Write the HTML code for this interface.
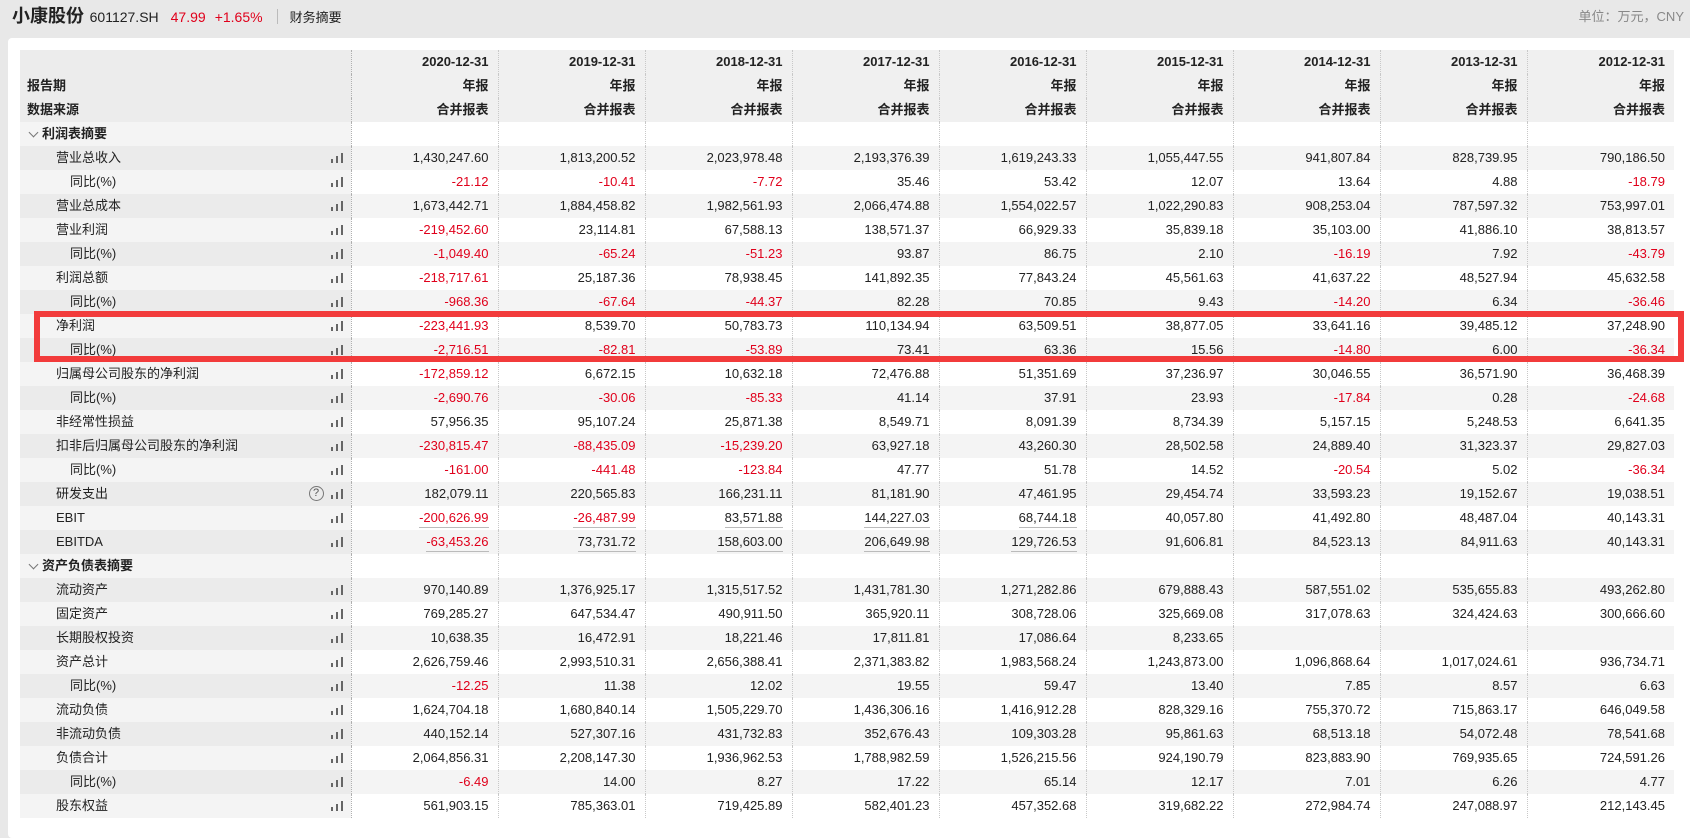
<!DOCTYPE html>
<html><head><meta charset="utf-8"><style>
*{margin:0;padding:0;box-sizing:border-box}
body{width:1690px;height:821px;overflow:hidden;background:#e8e8e8;font-family:"Liberation Sans","Noto Sans CJK SC",sans-serif;font-size:13px;color:#222;position:relative}
.top{position:absolute;left:12px;top:4px;height:24px;line-height:24px;white-space:nowrap}
.top b{font-size:18px;font-weight:bold;color:#222}
.top .code{font-size:14px;margin-left:2px}
.top .r{color:#e0001b;font-size:14px;margin-left:12px}
.top .sep{display:inline-block;width:1px;height:15px;background:#bbb;vertical-align:-2px;margin:0 12px 0 14px}
.unit{position:absolute;right:6px;top:6px;color:#888;font-size:13px}
.panel{position:absolute;left:8px;top:38px;width:1690px;height:800px;background:#fff;border-radius:4px}
table{position:absolute;left:20px;top:50px;border-collapse:collapse;table-layout:fixed}
td{height:24px;padding:0 9px 0 0;text-align:right;white-space:nowrap;border-left:1px dotted #c8c8c8;line-height:24px}
td.l{text-align:left;padding:0;border-left:none;position:relative;border-right:1px dotted #b0b0b0}
tr.h td{background:#f0f0f0;font-weight:bold}
tr.h td.l{background:#ececec;padding-left:7px}
tr.g td{background:#f4f4f4}
tr.g td.l{background:#ebebeb}
tr.w td{background:#fff}
tr.w td.l{background:#f4f4f4}
.t1{padding-left:36px!important}
.t2{padding-left:50px!important}
.sec{padding-left:22px!important;font-weight:bold}
.sec:before{content:"";position:absolute;left:10px;top:7px;width:6px;height:6px;border-right:1px solid #777;border-bottom:1px solid #777;transform:rotate(45deg)}
.n{color:#e0001b}
.ic{position:absolute;right:8px;top:7px;width:12px;height:10px;background:linear-gradient(#666,#666) 0 6px/2px 4px no-repeat,linear-gradient(#666,#666) 5px 3px/2px 7px no-repeat,linear-gradient(#666,#666) 10px 0/2px 10px no-repeat}
.q{position:absolute;right:27px;top:4px;width:15px;height:15px;border:1px solid #777;border-radius:50%;font-size:11px;line-height:13px;text-align:center;color:#555}
u{text-decoration:none;border-bottom:1px solid #bbb;padding-bottom:2px}
.box{position:absolute;left:34px;top:311px;width:1650px;height:51px;border:6px solid #f23b3b}
</style></head><body>
<div class="top"><b>小康股份</b> <span class="code">601127.SH</span><span class="r">47.99</span><span class="r" style="margin-left:9px">+1.65%</span><span class="sep"></span>财务摘要</div>
<div class="unit">单位：万元，CNY</div>
<div class="panel"></div>
<table>
<colgroup><col style="width:331px"><col style="width:147px"><col style="width:147px"><col style="width:147px"><col style="width:147px"><col style="width:147px"><col style="width:147px"><col style="width:147px"><col style="width:147px"><col style="width:147px"></colgroup>
<tr class="h"><td class="l"></td><td>2020-12-31</td><td>2019-12-31</td><td>2018-12-31</td><td>2017-12-31</td><td>2016-12-31</td><td>2015-12-31</td><td>2014-12-31</td><td>2013-12-31</td><td>2012-12-31</td></tr>
<tr class="h"><td class="l">报告期</td><td>年报</td><td>年报</td><td>年报</td><td>年报</td><td>年报</td><td>年报</td><td>年报</td><td>年报</td><td>年报</td></tr>
<tr class="h"><td class="l">数据来源</td><td>合并报表</td><td>合并报表</td><td>合并报表</td><td>合并报表</td><td>合并报表</td><td>合并报表</td><td>合并报表</td><td>合并报表</td><td>合并报表</td></tr>
<tr class="w"><td class="l sec">利润表摘要</td><td></td><td></td><td></td><td></td><td></td><td></td><td></td><td></td><td></td></tr>
<tr class="g"><td class="l t1">营业总收入<span class="ic"></span></td><td>1,430,247.60</td><td>1,813,200.52</td><td>2,023,978.48</td><td>2,193,376.39</td><td>1,619,243.33</td><td>1,055,447.55</td><td>941,807.84</td><td>828,739.95</td><td>790,186.50</td></tr>
<tr class="w"><td class="l t2">同比(%)<span class="ic"></span></td><td class="n">-21.12</td><td class="n">-10.41</td><td class="n">-7.72</td><td>35.46</td><td>53.42</td><td>12.07</td><td>13.64</td><td>4.88</td><td class="n">-18.79</td></tr>
<tr class="g"><td class="l t1">营业总成本<span class="ic"></span></td><td>1,673,442.71</td><td>1,884,458.82</td><td>1,982,561.93</td><td>2,066,474.88</td><td>1,554,022.57</td><td>1,022,290.83</td><td>908,253.04</td><td>787,597.32</td><td>753,997.01</td></tr>
<tr class="w"><td class="l t1">营业利润<span class="ic"></span></td><td class="n">-219,452.60</td><td>23,114.81</td><td>67,588.13</td><td>138,571.37</td><td>66,929.33</td><td>35,839.18</td><td>35,103.00</td><td>41,886.10</td><td>38,813.57</td></tr>
<tr class="g"><td class="l t2">同比(%)<span class="ic"></span></td><td class="n">-1,049.40</td><td class="n">-65.24</td><td class="n">-51.23</td><td>93.87</td><td>86.75</td><td>2.10</td><td class="n">-16.19</td><td>7.92</td><td class="n">-43.79</td></tr>
<tr class="w"><td class="l t1">利润总额<span class="ic"></span></td><td class="n">-218,717.61</td><td>25,187.36</td><td>78,938.45</td><td>141,892.35</td><td>77,843.24</td><td>45,561.63</td><td>41,637.22</td><td>48,527.94</td><td>45,632.58</td></tr>
<tr class="g"><td class="l t2">同比(%)<span class="ic"></span></td><td class="n">-968.36</td><td class="n">-67.64</td><td class="n">-44.37</td><td>82.28</td><td>70.85</td><td>9.43</td><td class="n">-14.20</td><td>6.34</td><td class="n">-36.46</td></tr>
<tr class="w"><td class="l t1">净利润<span class="ic"></span></td><td class="n">-223,441.93</td><td>8,539.70</td><td>50,783.73</td><td>110,134.94</td><td>63,509.51</td><td>38,877.05</td><td>33,641.16</td><td>39,485.12</td><td>37,248.90</td></tr>
<tr class="g"><td class="l t2">同比(%)<span class="ic"></span></td><td class="n">-2,716.51</td><td class="n">-82.81</td><td class="n">-53.89</td><td>73.41</td><td>63.36</td><td>15.56</td><td class="n">-14.80</td><td>6.00</td><td class="n">-36.34</td></tr>
<tr class="w"><td class="l t1">归属母公司股东的净利润<span class="ic"></span></td><td class="n">-172,859.12</td><td>6,672.15</td><td>10,632.18</td><td>72,476.88</td><td>51,351.69</td><td>37,236.97</td><td>30,046.55</td><td>36,571.90</td><td>36,468.39</td></tr>
<tr class="g"><td class="l t2">同比(%)<span class="ic"></span></td><td class="n">-2,690.76</td><td class="n">-30.06</td><td class="n">-85.33</td><td>41.14</td><td>37.91</td><td>23.93</td><td class="n">-17.84</td><td>0.28</td><td class="n">-24.68</td></tr>
<tr class="w"><td class="l t1">非经常性损益<span class="ic"></span></td><td>57,956.35</td><td>95,107.24</td><td>25,871.38</td><td>8,549.71</td><td>8,091.39</td><td>8,734.39</td><td>5,157.15</td><td>5,248.53</td><td>6,641.35</td></tr>
<tr class="g"><td class="l t1">扣非后归属母公司股东的净利润<span class="ic"></span></td><td class="n">-230,815.47</td><td class="n">-88,435.09</td><td class="n">-15,239.20</td><td>63,927.18</td><td>43,260.30</td><td>28,502.58</td><td>24,889.40</td><td>31,323.37</td><td>29,827.03</td></tr>
<tr class="w"><td class="l t2">同比(%)<span class="ic"></span></td><td class="n">-161.00</td><td class="n">-441.48</td><td class="n">-123.84</td><td>47.77</td><td>51.78</td><td>14.52</td><td class="n">-20.54</td><td>5.02</td><td class="n">-36.34</td></tr>
<tr class="g"><td class="l t1">研发支出<span class="q">?</span><span class="ic"></span></td><td>182,079.11</td><td>220,565.83</td><td>166,231.11</td><td>81,181.90</td><td>47,461.95</td><td>29,454.74</td><td>33,593.23</td><td>19,152.67</td><td>19,038.51</td></tr>
<tr class="w"><td class="l t1">EBIT<span class="ic"></span></td><td class="n"><u>-200,626.99</u></td><td class="n"><u>-26,487.99</u></td><td><u>83,571.88</u></td><td><u>144,227.03</u></td><td><u>68,744.18</u></td><td>40,057.80</td><td>41,492.80</td><td>48,487.04</td><td>40,143.31</td></tr>
<tr class="g"><td class="l t1">EBITDA<span class="ic"></span></td><td class="n"><u>-63,453.26</u></td><td><u>73,731.72</u></td><td><u>158,603.00</u></td><td><u>206,649.98</u></td><td><u>129,726.53</u></td><td>91,606.81</td><td>84,523.13</td><td>84,911.63</td><td>40,143.31</td></tr>
<tr class="w"><td class="l sec">资产负债表摘要</td><td></td><td></td><td></td><td></td><td></td><td></td><td></td><td></td><td></td></tr>
<tr class="g"><td class="l t1">流动资产<span class="ic"></span></td><td>970,140.89</td><td>1,376,925.17</td><td>1,315,517.52</td><td>1,431,781.30</td><td>1,271,282.86</td><td>679,888.43</td><td>587,551.02</td><td>535,655.83</td><td>493,262.80</td></tr>
<tr class="w"><td class="l t1">固定资产<span class="ic"></span></td><td>769,285.27</td><td>647,534.47</td><td>490,911.50</td><td>365,920.11</td><td>308,728.06</td><td>325,669.08</td><td>317,078.63</td><td>324,424.63</td><td>300,666.60</td></tr>
<tr class="g"><td class="l t1">长期股权投资<span class="ic"></span></td><td>10,638.35</td><td>16,472.91</td><td>18,221.46</td><td>17,811.81</td><td>17,086.64</td><td>8,233.65</td><td></td><td></td><td></td></tr>
<tr class="w"><td class="l t1">资产总计<span class="ic"></span></td><td>2,626,759.46</td><td>2,993,510.31</td><td>2,656,388.41</td><td>2,371,383.82</td><td>1,983,568.24</td><td>1,243,873.00</td><td>1,096,868.64</td><td>1,017,024.61</td><td>936,734.71</td></tr>
<tr class="g"><td class="l t2">同比(%)<span class="ic"></span></td><td class="n">-12.25</td><td>11.38</td><td>12.02</td><td>19.55</td><td>59.47</td><td>13.40</td><td>7.85</td><td>8.57</td><td>6.63</td></tr>
<tr class="w"><td class="l t1">流动负债<span class="ic"></span></td><td>1,624,704.18</td><td>1,680,840.14</td><td>1,505,229.70</td><td>1,436,306.16</td><td>1,416,912.28</td><td>828,329.16</td><td>755,370.72</td><td>715,863.17</td><td>646,049.58</td></tr>
<tr class="g"><td class="l t1">非流动负债<span class="ic"></span></td><td>440,152.14</td><td>527,307.16</td><td>431,732.83</td><td>352,676.43</td><td>109,303.28</td><td>95,861.63</td><td>68,513.18</td><td>54,072.48</td><td>78,541.68</td></tr>
<tr class="w"><td class="l t1">负债合计<span class="ic"></span></td><td>2,064,856.31</td><td>2,208,147.30</td><td>1,936,962.53</td><td>1,788,982.59</td><td>1,526,215.56</td><td>924,190.79</td><td>823,883.90</td><td>769,935.65</td><td>724,591.26</td></tr>
<tr class="g"><td class="l t2">同比(%)<span class="ic"></span></td><td class="n">-6.49</td><td>14.00</td><td>8.27</td><td>17.22</td><td>65.14</td><td>12.17</td><td>7.01</td><td>6.26</td><td>4.77</td></tr>
<tr class="w"><td class="l t1">股东权益<span class="ic"></span></td><td>561,903.15</td><td>785,363.01</td><td>719,425.89</td><td>582,401.23</td><td>457,352.68</td><td>319,682.22</td><td>272,984.74</td><td>247,088.97</td><td>212,143.45</td></tr>
</table>
<div class="box"></div>
</body></html>
